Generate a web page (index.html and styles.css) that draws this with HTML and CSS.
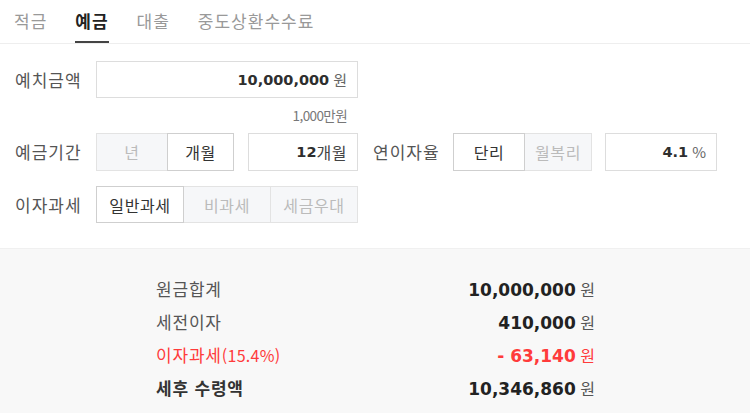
FILE: index.html
```html
<!DOCTYPE html>
<html lang="ko">
<head>
<meta charset="utf-8">
<title>예금 계산기</title>
<link rel="stylesheet" href="styles.css">
</head>
<body>
<nav class="tabs">
  <a class="tab">적금</a>
  <a class="tab active">예금</a>
  <a class="tab">대출</a>
  <a class="tab">중도상환수수료</a>
</nav>
<section class="form">
  <div class="row">
    <span class="label">예치금액</span>
    <div class="field field-amount"><b class="num">10,000,000</b><span class="unit">원</span></div>
  </div>
  <div class="hint">1,000만원</div>
  <div class="row">
    <span class="label">예금기간</span>
    <div class="toggle toggle-period">
      <span class="opt">년</span>
      <span class="opt on">개월</span>
    </div>
    <div class="field field-month"><b class="num">12</b><span class="unit dark">개월</span></div>
    <span class="label label2">연이자율</span>
    <div class="toggle toggle-rate">
      <span class="opt on">단리</span>
      <span class="opt">월복리</span>
    </div>
    <div class="field field-rate"><b class="num">4.1</b><span class="unit">%</span></div>
  </div>
  <div class="row row3">
    <span class="label">이자과세</span>
    <div class="toggle toggle-tax">
      <span class="opt on">일반과세</span>
      <span class="opt">비과세</span>
      <span class="opt">세금우대</span>
    </div>
  </div>
</section>
<section class="result">
  <div class="res-list">
    <div class="res-row"><span class="rl">원금합계</span><span class="rv"><b class="num">10,000,000</b> <span class="ru">원</span></span></div>
    <div class="res-row"><span class="rl">세전이자</span><span class="rv"><b class="num">410,000</b> <span class="ru">원</span></span></div>
    <div class="res-row red"><span class="rl">이자과세<span class="pct">(15.4%)</span></span><span class="rv"><b class="num">- 63,140</b> <span class="ru">원</span></span></div>
    <div class="res-row total"><span class="rl">세후 수령액</span><span class="rv"><b class="num">10,346,860</b> <span class="ru">원</span></span></div>
  </div>
</section>
</body>
</html>
```
FILE: styles.css
```css
html, body {
  margin: 0;
  padding: 0;
  background: #ffffff;
}
body {
  font-family: "Noto Sans CJK KR", "Noto Sans", sans-serif;
  color: #555;
  width: 750px;
  height: 414px;
  overflow: hidden;
}
.num {
  font-family: "DejaVu Sans", Verdana, sans-serif;
  font-weight: bold;
  color: #333;
}
.tabs {
  display: flex;
  gap: 28px;
  padding-left: 14px;
  height: 43px;
  border-bottom: 1px solid #eeeeee;
  box-sizing: content-box;
}
.tab {
  font-size: 17px;
  letter-spacing: 1px;
  color: #999;
  line-height: 41px;
  height: 41px;
  border-bottom: 2px solid transparent;
}
.tab.active {
  color: #222;
  font-weight: bold;
  border-bottom-color: #444;
  letter-spacing: 1px;
}
.form {
  padding: 17px 0 25px 15px;
}
.row {
  display: flex;
  align-items: center;
  height: 37px;
}
.row3 {
  margin-top: 16px;
  height: 37px;
}
.label {
  width: 81px;
  font-size: 17px;
  letter-spacing: 1px;
  color: #555;
  flex-shrink: 0;
}
.label2 {
  width: 80px;
  margin-left: 15px;
}
.field {
  box-sizing: border-box;
  height: 37px;
  border: 1px solid #dddddd;
  background: #fff;
  display: flex;
  align-items: center;
  justify-content: flex-end;
  padding-right: 10px;
}
.field .num {
  font-size: 14.5px;
  color: #2e2e2e;
}
.unit {
  font-size: 15px;
  color: #666;
  margin-left: 4px;
}
.unit.dark {
  margin-left: 0;
  font-size: 16px;
  letter-spacing: 0.5px;
  color: #444;
}
.field-amount { width: 262px; }
.field-month { width: 110px; margin-left: 14px; height: 38px; }
.field-rate { width: 112px; margin-left: 13px; height: 38px; }
.hint {
  width: 332px;
  text-align: right;
  font-size: 13.5px;
  color: #777;
  letter-spacing: -0.6px;
  line-height: 20px;
  padding-top: 7px;
  height: 28px;
}
.toggle {
  display: flex;
  height: 38px;
  box-sizing: border-box;
}
.opt {
  box-sizing: border-box;
  display: flex;
  align-items: center;
  justify-content: center;
  background: #f6f7f9;
  border: 1px solid #e3e3e3;
  color: #bbb;
  font-size: 16px;
  letter-spacing: 0.6px;
}
.opt + .opt { margin-left: -1px; }
.opt.on {
  background: #fff;
  color: #333;
  border-color: #cfcfcf;
  position: relative;
  z-index: 1;
}
.toggle-period .opt:first-child { width: 72px; }
.toggle-period .opt:last-child { width: 67px; }
.toggle-rate .opt:first-child { width: 72px; }
.toggle-rate .opt:last-child { width: 68px; }
.toggle-tax { height: 37px; }
.toggle-tax .opt { width: 88px; }
.result {
  box-sizing: border-box;
  background: #f8f8f8;
  border-top: 1px solid #f0f0f0;
  padding: 23px 0 0 156px;
  height: 165px;
}
.res-list {
  width: 439px;
}
.res-row {
  display: flex;
  justify-content: space-between;
  align-items: center;
  height: 33px;
}
.rl {
  font-size: 17px;
  letter-spacing: 0.8px;
  color: #555;
}
.rv .num {
  font-size: 17px;
  color: #222;
}
.ru {
  font-size: 16px;
  color: #555;
}
.res-row.red .rl,
.res-row.red .num,
.res-row.red .ru {
  color: #ff3b3b;
}
.pct {
  font-size: 16px;
  letter-spacing: 0.3px;
}
.res-row.total .rl {
  font-weight: bold;
  color: #333;
}
```
